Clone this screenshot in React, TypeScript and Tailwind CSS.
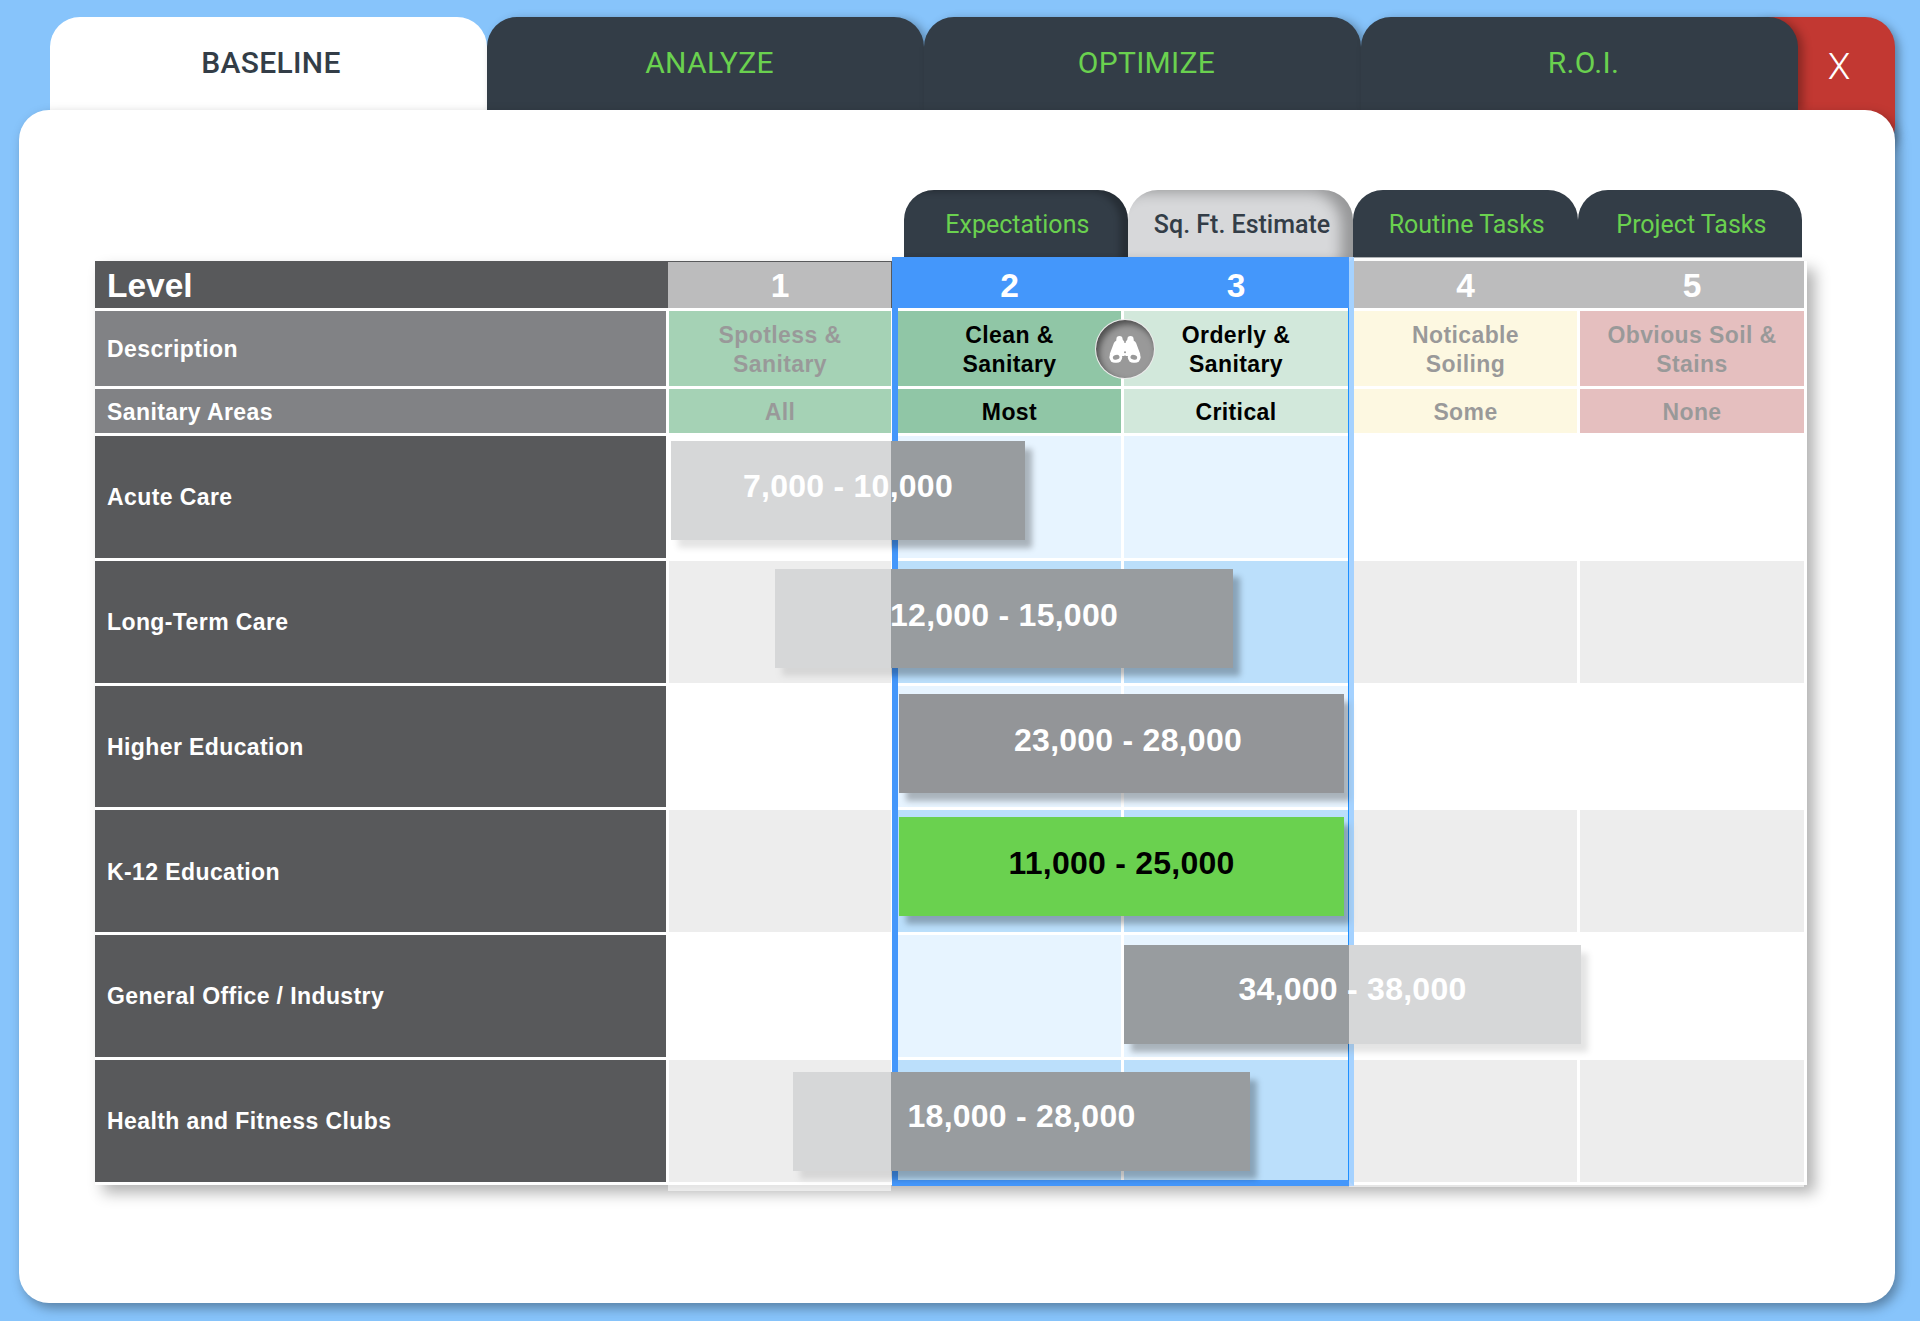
import clsx from "clsx";

interface Column {
	level: string;
	description: string[];
	sanitary: string;
	color: string;
	spacing: string;
	stripes: [string, string];
}

interface Facility {
	name: string;
	range: string;
	bar: string;
}

const TABS = ["BASELINE", "ANALYZE", "OPTIMIZE", "R.O.I."];
const SUB_TABS = ["Expectations", "Sq. Ft. Estimate", "Routine Tasks", "Project Tasks"];

const COLUMNS: Column[] = [
	{ level: "1", description: ["Spotless &", "Sanitary"], sanitary: "All", color: "bg-[#1e8e48]", spacing: "mr-[7px]", stripes: ["bg-white", "bg-[#d1d1d1]"] },
	{ level: "2", description: ["Clean &", "Sanitary"], sanitary: "Most", color: "bg-[#90c6a6]", spacing: "mr-[3px]", stripes: ["bg-[#e7f4ff]", "bg-[#bbdffb]"] },
	{ level: "3", description: ["Orderly &", "Sanitary"], sanitary: "Critical", color: "bg-[#d2e8db]", spacing: "mr-[6px]", stripes: ["bg-[#e7f4ff]", "bg-[#bbdffb]"] },
	{ level: "4", description: ["Noticable", "Soiling"], sanitary: "Some", color: "bg-[#faedb4]", spacing: "mr-[3px]", stripes: ["bg-white", "bg-[#d1d1d1]"] },
	{ level: "5", description: ["Obvious Soil &", "Stains"], sanitary: "None", color: "bg-[#bd6060]", spacing: "", stripes: ["bg-white", "bg-[#d1d1d1]"] },
];

// Bar positions are relative to the table's top left corner
const FACILITIES: Facility[] = [
	{ name: "Acute Care", range: "7,000 - 10,000", bar: "left-[576px] top-[180px] w-[354px] pb-[8px] bg-[#989c9f] text-white" },
	{ name: "Long-Term Care", range: "12,000 - 15,000", bar: "left-[680px] top-[308px] w-[458px] pb-[7px] bg-[#989c9f] text-white" },
	{ name: "Higher Education", range: "23,000 - 28,000", bar: "left-[804px] top-[433px] w-[445px] pb-[6px] bg-[#939598] pl-[13px] text-white" },
	{ name: "K-12 Education", range: "11,000 - 25,000", bar: "left-[804px] top-[556px] w-[445px] pb-[7px] bg-[#6ad14f] text-black" },
	{ name: "General Office / Industry", range: "34,000 - 38,000", bar: "left-[1029px] top-[684px] w-[457px] pb-[10px] bg-[#989c9f] text-white" },
	{ name: "Health and Fitness Clubs", range: "18,000 - 28,000", bar: "left-[698px] top-[811px] w-[457px] pb-[10px] bg-[#989c9f] text-white" },
];

const ROW = "grid grid-cols-[574px_229px_226px_230px_226px_224px]";

const Binoculars = () => (
	<svg viewBox="0 0 32 27" className="h-[27px] w-8">
		<g fill="#fff">
			<circle cx="10.500" cy="3.100" r="3.100" />
			<circle cx="21.500" cy="3.100" r="3.100" />
			<path d="M7.400 3.500h6.200l1.700 2.300V20h-5L.6 18.500 4.900 7Q5.400 5.500 7.400 4.500ZM24.600 3.500h-6.200l-1.700 2.300V20h5l9.700-1.500L27.100 7q-.5-1.500-2.500-2.500Z" />
			<path d="M14 7h4v12.500h-4Z" />
			<rect x=".4" y="15.500" width="12.800" height="11.300" rx="5.600" />
			<rect x="18.800" y="15.500" width="12.800" height="11.300" rx="5.600" />
		</g>
		<ellipse cx="7.200" cy="21.300" rx="3.400" ry="2.300" fill="#999" transform="rotate(-15 7.200 21.300)" />
		<ellipse cx="24.800" cy="21.300" rx="3.400" ry="2.300" fill="#999" transform="rotate(15 24.800 21.300)" />
		<circle cx="16" cy="16.300" r="1" fill="#999" />
	</svg>
);

const Header = () => (
	<header className="flex h-[110px] pt-[17px] pl-[49.500px]">
		{TABS.map((tab, i) => (
			<button
				key={tab}
				className={clsx(
					"relative z-10 h-[93px] w-[437px] rounded-t-[30px] pb-[2px] font-[Roboto,sans-serif] text-[30px] tracking-[0.3px]",
					i === 0 ? "bg-white pl-[6px] font-medium text-[#333d47]" : "bg-[#333d47] pl-[9px] text-[#6ad14f] shadow-[5px_2px_10px_rgba(0,0,0,0.3)]",
				)}
			>
				{tab}
			</button>
		))}
		<button className="-ml-[60px] flex h-[138px] w-[157px] justify-center rounded-[30px] bg-[#c23832] pt-[22px] pl-[46px] font-[Roboto,sans-serif] text-[37px] font-light text-white shadow-[4px_4px_10px_rgba(0,0,0,0.35)]">
			X
		</button>
	</header>
);

const SubTabs = () => (
	<nav className="ml-[884.500px] flex h-[68px]">
		{SUB_TABS.map((tab, i) => (
			<button
				key={tab}
				className={clsx(
					"h-[68px] w-[224.700px] rounded-t-[30px] pt-px pl-[3px] font-[Roboto,sans-serif] text-[25px]",
					i === 1 ? "bg-[#d7d8da] font-medium text-[#333d47]" : "bg-[#333d47] font-normal text-[#6ad14f]",
					i === 0 && "shadow-[inset_-8px_2px_6px_rgba(0,0,0,0.25)]",
					i === 1 && "shadow-[inset_-14px_4px_14px_-2px_rgba(0,0,0,0.3)]",
				)}
			>
				{tab}
			</button>
		))}
	</nav>
);

const Table = () => (
	<section className="relative mt-[3px] ml-[76px] h-[924px] w-[1712px] bg-white shadow-[8px_8px_14px_rgba(0,0,0,0.3)]">
		<div className={clsx(ROW, "mb-[3px] h-[47px] w-[1709px] items-center bg-[#58595b] text-[33.500px] text-white")}>
			<div className="pl-3">Level</div>
			{COLUMNS.map((col) => (
				<div key={col.level} className={clsx("relative z-10 text-center", col.spacing)}>{col.level}</div>
			))}
		</div>
		<div className={clsx(ROW, "mb-[3px] h-[75px] text-[23px] leading-[28.500px] tracking-[0.4px]")}>
			<div className="mr-[3px] flex items-center bg-[#818285] pt-[2px] pl-3 text-white">Description</div>
			{COLUMNS.map((col) => (
				<div key={col.level} className={clsx("flex flex-col items-center justify-center pt-[2px] text-black", col.color, col.spacing)}>
					{col.description.map((line) => (
						<span key={line}>{line}</span>
					))}
				</div>
			))}
		</div>
		<div className={clsx(ROW, "mb-[3px] h-[44px] text-[23px] tracking-[0.4px]")}>
			<div className="mr-[3px] flex items-center bg-[#818285] pt-[2px] pl-3 text-white">Sanitary Areas</div>
			{COLUMNS.map((col) => (
				<div key={col.level} className={clsx("flex items-center justify-center pt-[2px] text-black", col.color, col.spacing)}>{col.sanitary}</div>
			))}
		</div>
		<div className="flex h-[749px] flex-col text-[23px] tracking-[0.4px]">
			{FACILITIES.map((facility, i) => (
				<div key={facility.name} className={clsx(ROW, "flex-1 pb-[3px]")}>
					<div className="mr-[3px] flex items-center bg-[#58595b] pt-px pl-3 text-white">{facility.name}</div>
					{COLUMNS.map((col) => (
						<div key={col.level} className={clsx(col.stripes[i % 2], col.spacing)} />
					))}
				</div>
			))}
		</div>

		{/* Selected levels */}
		<div className="absolute -top-1 left-[797px] h-[929px] w-[462px] border-6 border-[#4497fb] border-r-[#1e90ff]" />
		<div className="absolute -top-1 left-[797px] h-[51px] w-[457px] bg-[#4497fb]" />
		{FACILITIES.map((facility) => (
			<div
				key={facility.name}
				className={clsx("absolute flex h-[98.500px] items-center justify-center text-[32px] tracking-[0.25px] whitespace-nowrap shadow-[7px_8px_6px_rgba(0,0,0,0.27)]", facility.bar)}
			>
				{facility.range}
			</div>
		))}

		{/* Fade everything outside of the selected levels */}
		<div className="absolute top-px left-[573px] h-[929px] w-[223px] bg-white/60" />
		<div className="absolute -top-1 left-[1254px] h-[930px] w-[455px] bg-white/60" />

		<button className="absolute top-[58px] left-[1000px] flex size-[60px] items-center justify-center rounded-full border border-white/80 bg-[#999] shadow-[inset_3px_4px_6px_rgba(0,0,0,0.5)]">
			<Binoculars />
		</button>
	</section>
);

const App = () => (
	<main className="h-[1321px] w-[1920px] overflow-hidden bg-[#87c4fb]">
		<Header />
		<div className="relative z-20 ml-[19px] h-[1193px] w-[1876px] rounded-[30px] bg-white pt-[80px] font-['Liberation_Sans',Arial,sans-serif] font-bold shadow-[4px_5px_12px_rgba(0,0,0,0.35)]">
			<SubTabs />
			<Table />
		</div>
	</main>
);

export default App;
